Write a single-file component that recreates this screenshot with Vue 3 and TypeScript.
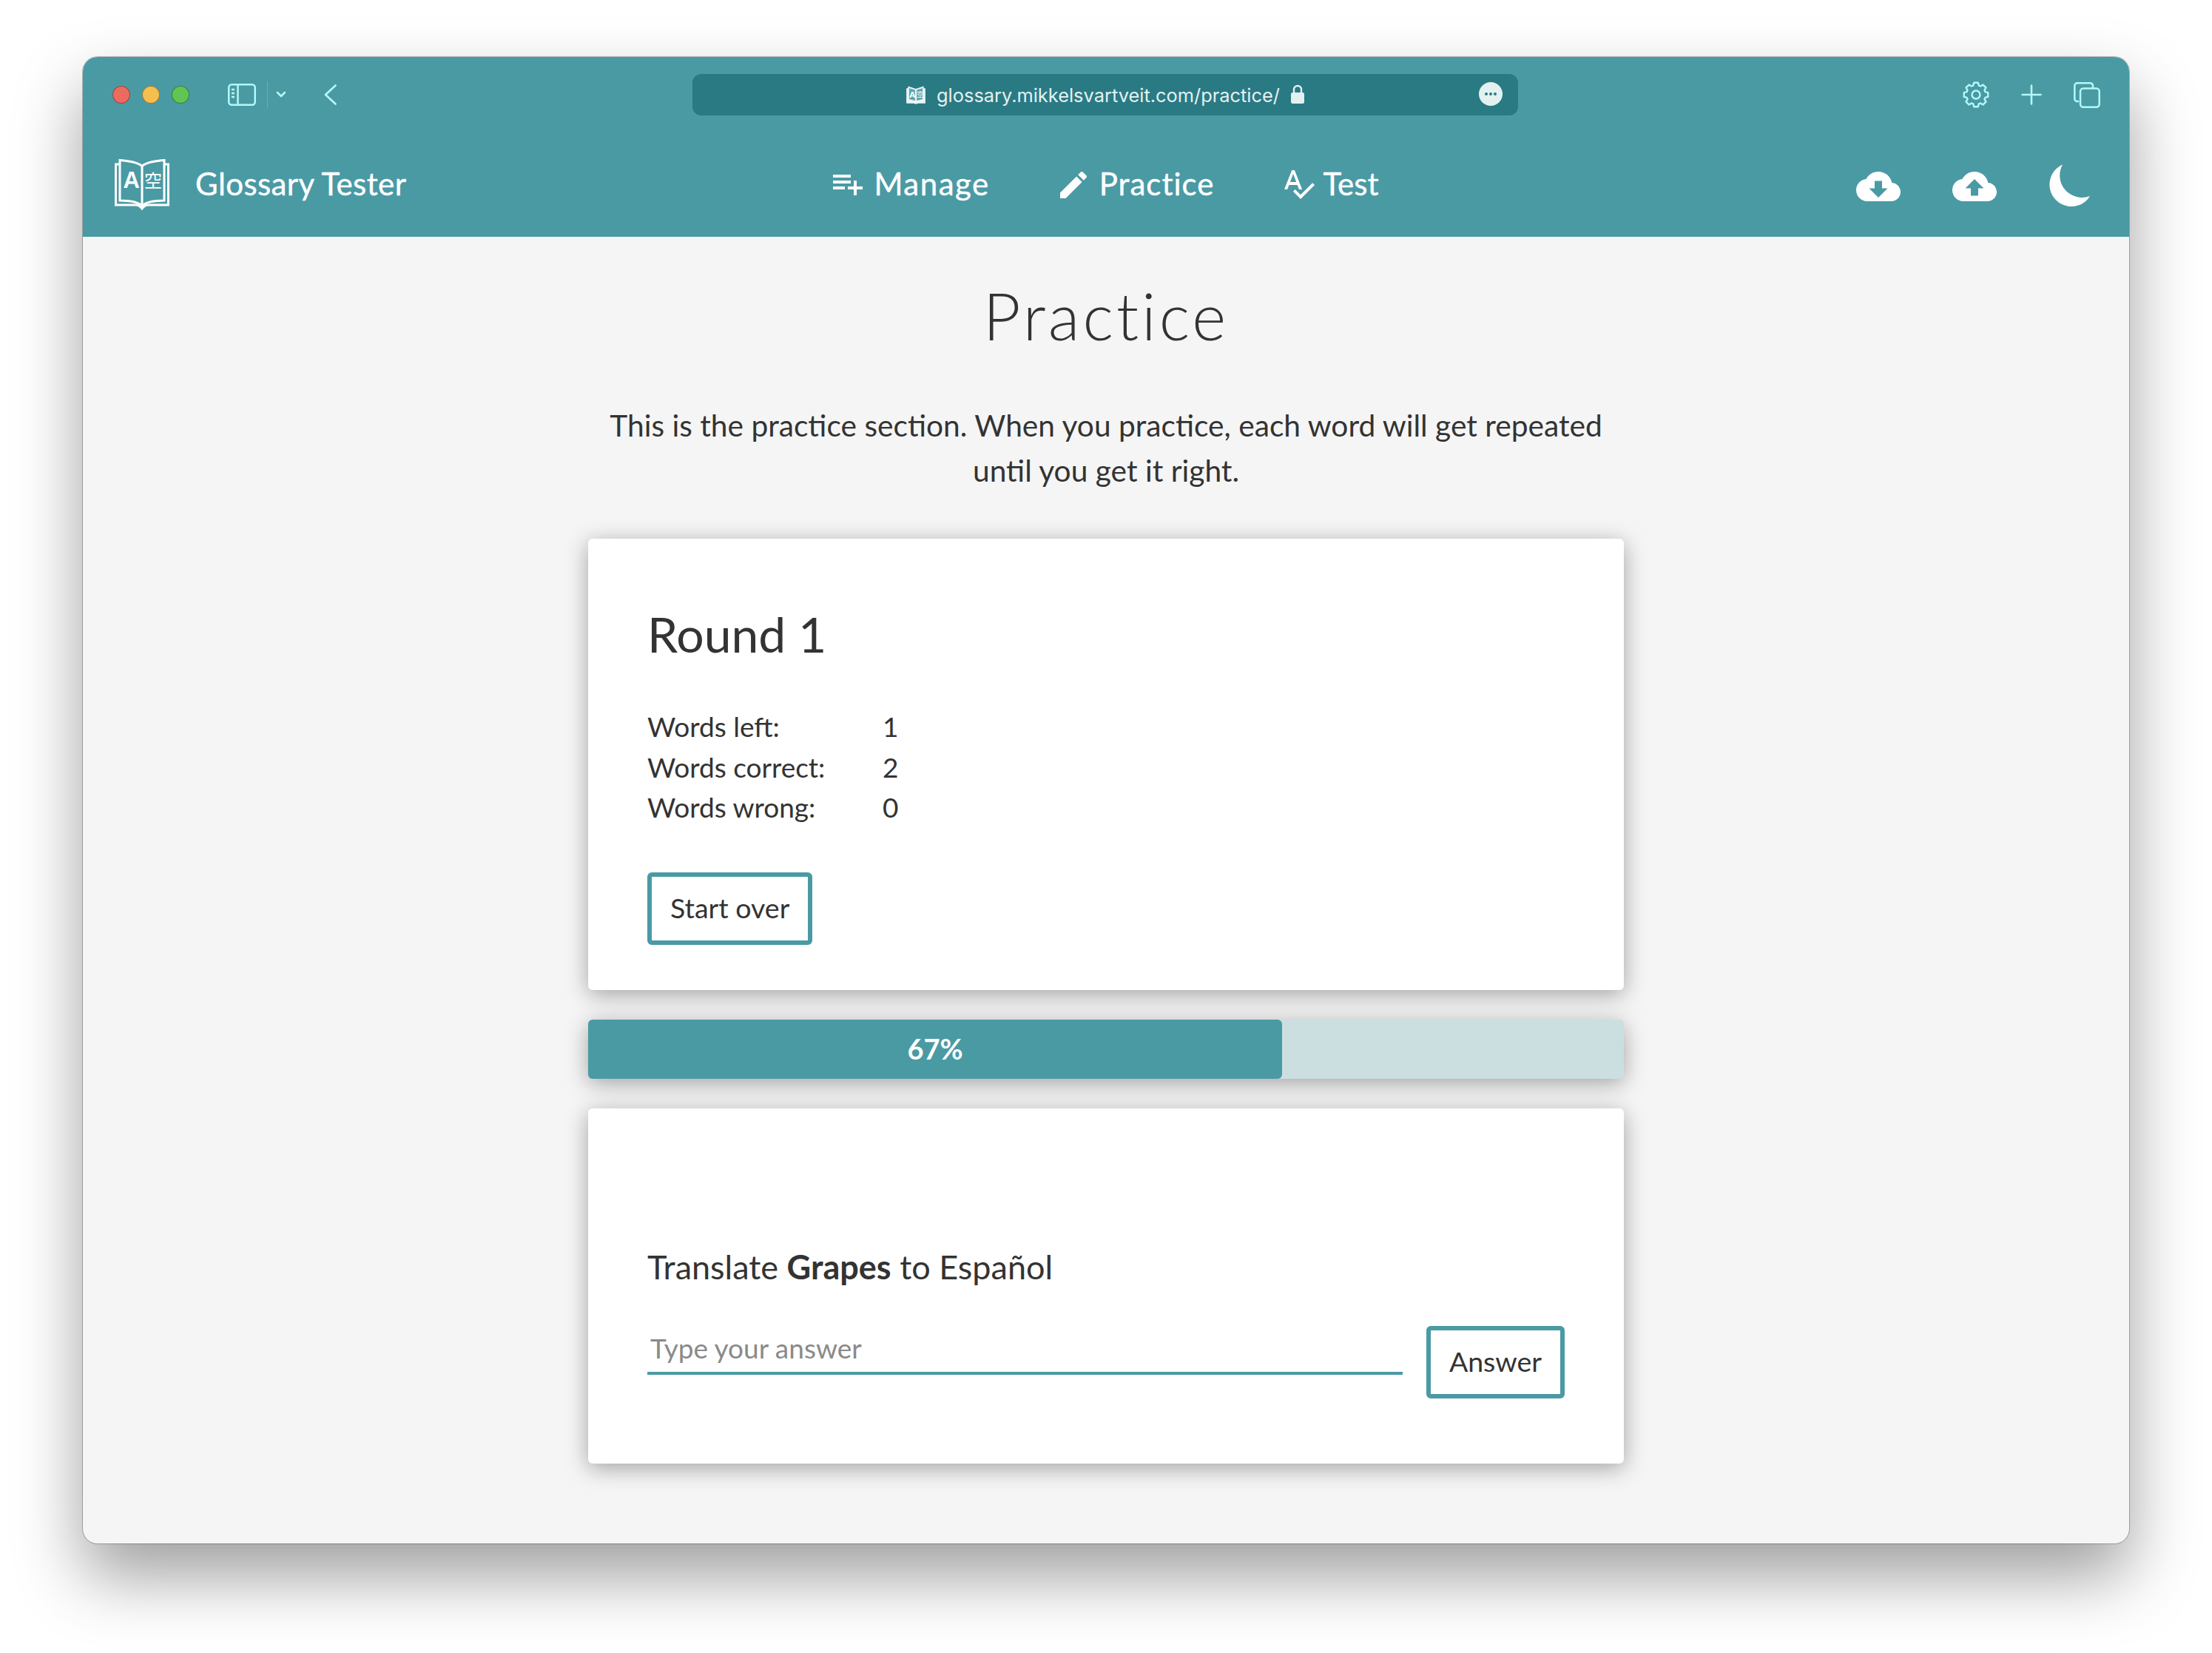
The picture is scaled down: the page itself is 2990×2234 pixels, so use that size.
<script setup lang="ts">
import { computed } from 'vue'

const stats = [
  { label: 'Words left:', value: 1 },
  { label: 'Words correct:', value: 2 },
  { label: 'Words wrong:', value: 0 }
]
const progress = 67

const navLinks = [
  { label: 'Manage', view: '2 6 20 14', w: 40, h: 28, d: 'M14 10H2v2h12v-2zm0-4H2v2h12V6zm4 8v-4h-2v4h-4v2h4v4h2v-4h4v-2h-4zM2 16h8v-2H2v2z' },
  { label: 'Practice', view: '3 3 18 18', w: 36, h: 36, d: 'M3 17.25V21h3.75L17.81 9.94l-3.75-3.75L3 17.25zM20.71 7.04c.39-.39.39-1.02 0-1.41l-2.34-2.34c-.39-.39-1.02-.39-1.41 0l-1.83 1.83 3.75 3.75 1.83-1.83z' },
  { label: 'Test', view: '2.46 3 20.54 19.5', w: 41, h: 39, d: 'M12.45 16h2.09L9.43 3H7.57L2.46 16h2.09l1.12-3h5.64l1.14 3zm-6.02-5L8.5 5.48 10.57 11H6.43zm15.16.59l-8.09 8.09L9.83 16l-1.41 1.41 5.09 5.09L23 13l-1.41-1.41z' }
]

// eight tooth cog for the browser toolbar
const gearPoints = computed(() => {
  const pts: string[] = []
  for (let i = 0; i < 8; i++) {
    const a = (i * Math.PI) / 4 - Math.PI / 2
    const offsets: [number, number][] = [[-0.3, 13], [-0.17, 16.5], [0.17, 16.5], [0.3, 13]]
    for (const [o, r] of offsets) {
      pts.push(`${(18 + r * Math.cos(a + o)).toFixed(2)},${(18 + r * Math.sin(a + o)).toFixed(2)}`)
    }
  }
  return pts.join(' ')
})
</script>

<template>
  <div class="page">
    <div class="window">
      <header class="header">
        <div class="titlebar">
          <div class="lights">
            <span class="light light--red"></span>
            <span class="light light--yellow"></span>
            <span class="light light--green"></span>
          </div>
          <svg class="tb-sidebar" width="38" height="30" viewBox="0 0 38 30" fill="none" stroke="#b4f8f8" stroke-width="2.5">
            <rect x="1.25" y="1.25" width="35.5" height="27.5" rx="4" />
            <path d="M13.5 1v28M5 8h4M5 13h4M5 18h4" />
          </svg>
          <span class="tb-divider"></span>
          <svg class="tb-chevron" width="14" height="10" viewBox="0 0 14 10" fill="none" stroke="#b4f8f8" stroke-width="2.6" stroke-linecap="round" stroke-linejoin="round">
            <path d="M2 2l5 5 5-5" />
          </svg>
          <svg class="tb-back" width="17" height="28" viewBox="0 0 17 28" fill="none" stroke="#b4f8f8" stroke-width="2.6" stroke-linecap="round" stroke-linejoin="round">
            <path d="M15.5 1.5L2 14l13.5 12.5" />
          </svg>
          <div class="urlbar">
            <svg class="favicon" width="28" height="27" viewBox="0 0 74 69">
              <path d="M3 10h6V3l28 9 28-9v7h6v54H45l-8 3-8-3H3z" fill="#eaf5f5" />
              <path d="M13 10l21 6v38l-21-5zM61 10l-21 6v38l21-5z" fill="#5fa6af" />
              <text x="13" y="43" class="brand__a">A</text>
              <text x="40" y="40" class="brand__kanji">空</text>
            </svg>
            <span class="url">glossary.mikkelsvartveit.com/practice/</span>
            <svg class="lock" width="20" height="26" viewBox="0 0 20 26">
              <path d="M5 12V7a5 5 0 0 1 10 0v5" fill="none" stroke="#e4f1f1" stroke-width="2.4" />
              <rect x="1" y="11" width="18" height="15" rx="2.5" fill="#e4f1f1" />
            </svg>
            <span class="more">
              <i></i><i></i><i></i>
            </span>
          </div>
          <div class="tb-right">
            <svg width="36" height="36" viewBox="0 0 36 36" fill="none" stroke="#b4f8f8" stroke-width="2.4" stroke-linejoin="round">
              <polygon :points="gearPoints" />
              <circle cx="18" cy="18" r="5.5" />
            </svg>
            <svg width="28" height="28" viewBox="0 0 28 28" stroke="#b4f8f8" stroke-width="2.6" stroke-linecap="round">
              <path d="M14 1.5v25M1.5 14h25" />
            </svg>
            <svg width="36" height="35" viewBox="0 0 36 35" fill="none" stroke="#b4f8f8" stroke-width="2.5">
              <path d="M7 26H5a3.6 3.6 0 0 1-3.7-3.6V5A3.6 3.6 0 0 1 5 1.3h17A3.6 3.6 0 0 1 26 5v3" />
              <rect x="9" y="8.5" width="25.7" height="25.2" rx="4" />
            </svg>
          </div>
        </div>

        <nav class="navbar">
          <div class="brand">
            <svg class="brand__logo" width="74" height="69" viewBox="0 0 74 69" fill="none" stroke="#fff" stroke-width="3">
              <path d="M7 7H1.500v55H28c4 0 6.500 1.500 9 5 2.500-3.500 5-5 9-5h26.500V7H67" />
              <path d="M7 1.500c12 1 24 2.500 30 8 6-5.500 18-7 30-8V56c-12 0-24 1.500-30 7-6-5.500-18-7-30-7z" />
              <path d="M37 9.500V63" />
              <text x="11.500" y="39" class="brand__a">A</text>
              <text x="40" y="38" class="brand__kanji">空</text>
            </svg>
            <span class="brand__name">Glossary Tester</span>
          </div>
          <div class="nav-links">
            <a v-for="link in navLinks" :key="link.label" class="nav-link">
              <svg :width="link.w" :height="link.h" :viewBox="link.view" fill="#fff">
                <path :d="link.d" />
              </svg>
              <span>{{ link.label }}</span>
            </a>
          </div>
          <div class="nav-actions">
            <svg width="60" height="40" viewBox="0 4 24 16" fill="#fff">
              <path d="M19.35 10.04C18.67 6.59 15.64 4 12 4 9.11 4 6.6 5.64 5.35 8.04 2.34 8.36 0 10.91 0 14c0 3.31 2.69 6 6 6h13c2.76 0 5-2.24 5-5 0-2.64-2.05-4.78-4.65-4.96zM17 13l-5 5-5-5h3V9h4v4h3z" />
            </svg>
            <svg width="60" height="40" viewBox="0 4 24 16" fill="#fff">
              <path d="M19.35 10.04C18.67 6.59 15.64 4 12 4 9.11 4 6.6 5.64 5.35 8.04 2.34 8.36 0 10.91 0 14c0 3.31 2.69 6 6 6h13c2.76 0 5-2.24 5-5 0-2.64-2.05-4.78-4.65-4.96zM14 13v4h-4v-4H7l5-5 5 5h-3z" />
            </svg>
            <svg class="moon" width="60" height="60" viewBox="0 0 60 60" fill="#fff">
              <path d="M21 .5A29.500 29.500 0 1 0 58 43A30 30 0 0 1 21 .5z" />
            </svg>
          </div>
        </nav>
      </header>

      <main class="content">
        <h1 class="title">Practice</h1>
        <p class="intro">
          This is the practice section. When you practice, each word will get repeated<br />until you get it right.
        </p>

        <section class="card card--round">
          <h2 class="card__title">Round 1</h2>
          <div class="stats">
            <template v-for="row in stats" :key="row.label">
              <span>{{ row.label }}</span>
              <span class="stats__value">{{ row.value }}</span>
            </template>
          </div>
          <button class="btn" type="button">Start over</button>
        </section>

        <div class="progress">
          <div class="progress__bar" :style="{ width: progress + '%' }">{{ progress }}%</div>
        </div>

        <section class="card card--question">
          <p class="question">Translate <b>Grapes</b> to Español</p>
          <form class="answer" @submit.prevent>
            <input class="answer__input" type="text" placeholder="Type your answer" />
            <button class="btn" type="submit">Answer</button>
          </form>
        </section>
      </main>
    </div>
  </div>
</template>

<style>
html,
body {
  margin: 0;
  background: #fff;
}
</style>

<style scoped>
.page {
  width: 2990px;
  height: 2234px;
  box-sizing: border-box;
  padding: 77px 112px 0;
  overflow: hidden;
  background: #fff;
  font-family: 'Lato', 'Noto Sans', sans-serif;
  color: #333;
}

.window {
  height: 2009px;
  border-radius: 20px;
  background: #f5f5f5;
  overflow: hidden;
  box-shadow:
    0 0 0 1px rgba(0, 0, 0, 0.25),
    0 44px 90px rgba(0, 0, 0, 0.38);
}

.header {
  height: 243px;
  background: #4a9aa4;
}

/* Browser chrome */
.titlebar {
  display: flex;
  align-items: center;
  height: 102px;
}

.lights {
  display: flex;
  gap: 16px;
  margin-left: 40px;
}

.light {
  width: 24px;
  height: 24px;
  box-sizing: border-box;
  border-radius: 50%;
  border: 1px solid rgba(0, 0, 0, 0.35);
}
.light--red {
  background: #ed6a5e;
}
.light--yellow {
  background: #f5bf4f;
}
.light--green {
  background: #61c554;
}

.tb-sidebar {
  margin-left: 52px;
}

.tb-divider {
  width: 1px;
  height: 36px;
  margin-left: 15px;
  background: rgba(255, 255, 255, 0.18);
}

.tb-chevron {
  margin-left: 11px;
}

.tb-back {
  margin-left: 51px;
}

.urlbar {
  position: relative;
  display: flex;
  align-items: center;
  justify-content: center;
  gap: 14px;
  width: 1116px;
  height: 56px;
  margin-left: 481px;
  border-radius: 12px;
  background: #2a7a84;
  color: #e4f1f1;
}

.url {
  font-family: 'Inter', 'Liberation Sans', sans-serif;
  font-size: 25.4px;
}

.lock {
  margin-bottom: 2px;
}

.more {
  position: absolute;
  right: 21px;
  top: 11px;
  display: flex;
  align-items: center;
  justify-content: center;
  gap: 2px;
  width: 32px;
  height: 32px;
  border-radius: 50%;
  background: #e4f1f1;
}
.more i {
  width: 4px;
  height: 4px;
  border-radius: 50%;
  background: #2a7a84;
}

.tb-right {
  display: flex;
  align-items: center;
  gap: 43px;
  margin-left: auto;
  margin-right: 39px;
}

/* App nav */
.navbar {
  display: grid;
  grid-template-columns: 1fr auto 1fr;
  align-items: center;
  height: 141px;
  color: #fff;
}

.brand {
  display: flex;
  align-items: center;
  gap: 35px;
  margin-left: 43px;
}

.brand__a {
  font-family: 'Liberation Sans', sans-serif;
  font-size: 31px;
  font-weight: 700;
  fill: #fff;
  stroke: none;
}

.brand__kanji {
  font-family: 'Noto Sans CJK JP', sans-serif;
  font-size: 24px;
  fill: #fff;
  stroke: none;
}

.brand__name {
  margin-bottom: 3px;
  font-size: 42px;
  letter-spacing: 0.4px;
  -webkit-text-stroke: 0.4px #fff;
}

.nav-links {
  display: flex;
  align-items: center;
  gap: 95px;
}

.nav-link {
  display: flex;
  align-items: center;
  gap: 15px;
  font-size: 42px;
  letter-spacing: 1.5px;
  -webkit-text-stroke: 0.4px #fff;
}
.nav-link:nth-child(2) {
  gap: 17px;
  letter-spacing: 1px;
}
.nav-link:last-child {
  gap: 11px;
  letter-spacing: 0;
}
.nav-link span {
  margin-bottom: 3px;
}

.nav-actions {
  display: flex;
  align-items: center;
  justify-content: flex-end;
  gap: 70px;
  margin-right: 49px;
  padding-top: 5px;
}

.moon {
  margin-left: -2px;
  margin-right: 2px;
}

/* Page */
.content {
  display: flex;
  flex-direction: column;
  align-items: center;
}

.title {
  margin: 51px 0 0;
  font-size: 88px;
  line-height: 110px;
  font-weight: 300;
  letter-spacing: 4px;
}

.intro {
  margin: 63px 0 0;
  font-size: 40.7px;
  line-height: 61px;
  text-align: center;
}

.card {
  box-sizing: border-box;
  width: 1400px;
  padding: 0 80px;
  border-radius: 6px;
  background: #fff;
  box-shadow: 0 6px 30px rgba(0, 0, 0, 0.34);
}

.card--round {
  height: 610px;
  margin-top: 62px;
  padding-top: 89px;
}

.card__title {
  margin: 0;
  font-size: 66px;
  line-height: 80px;
  font-weight: 400;
}

.stats {
  display: grid;
  grid-template-columns: 318px auto;
  justify-content: start;
  margin-top: 58px;
  font-size: 37px;
  line-height: 54.5px;
}

.btn {
  height: 98px;
  box-sizing: border-box;
  padding: 0 25px 3px;
  border: 6px solid #4a9aa4;
  border-radius: 6px;
  background: #fff;
  color: #333;
  font-family: inherit;
  font-size: 37.5px;
}

.card--round .btn {
  margin-top: 60px;
}

.progress {
  width: 1400px;
  height: 80px;
  margin-top: 40px;
  border-radius: 6px;
  background: #cbdfe1;
  box-shadow: 0 6px 30px rgba(0, 0, 0, 0.34);
}

.progress__bar {
  height: 100%;
  box-sizing: border-box;
  padding-bottom: 3px;
  display: flex;
  align-items: center;
  justify-content: center;
  border-radius: 6px;
  background: #4a9aa4;
  color: #fff;
  font-size: 38px;
  font-weight: 700;
}

.card--question {
  height: 480px;
  margin-top: 40px;
  padding-top: 184px;
}

.question {
  margin: 0;
  font-size: 45px;
  line-height: 60px;
}

.answer {
  display: flex;
  align-items: flex-start;
  gap: 32px;
  margin-top: 50px;
}

.answer__input {
  flex: 1;
  height: 66px;
  box-sizing: border-box;
  padding: 0 4px 3px;
  border: none;
  border-bottom: 4px solid #4a9aa4;
  background: transparent;
  font-family: inherit;
  font-size: 37px;
  outline: none;
  color: #333;
}

.answer__input::placeholder {
  color: #8a8a8a;
}
</style>
